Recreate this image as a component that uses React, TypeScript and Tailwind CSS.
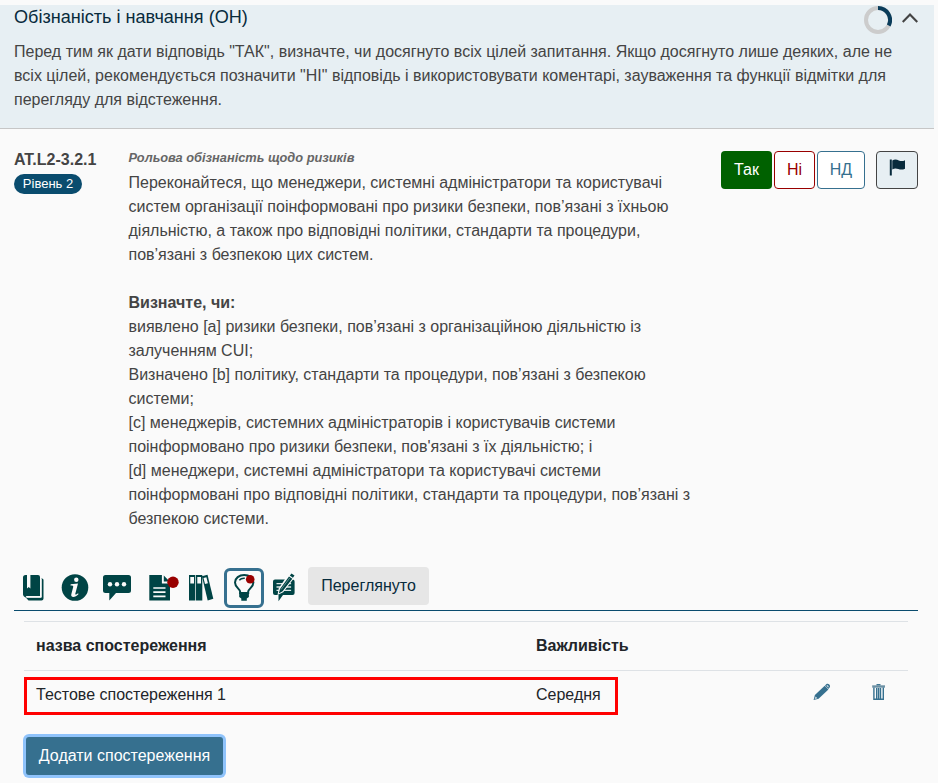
import React from "react";

const intro = [
  'Перед тим як дати відповідь "ТАК", визначте, чи досягнуто всіх цілей запитання. Якщо досягнуто лише деяких, але не',
  'всіх цілей, рекомендується позначити "НІ" відповідь і використовувати коментарі, зауваження та функції відмітки для',
  "перегляду для відстеження.",
];

const question = [
  "Переконайтеся, що менеджери, системні адміністратори та користувачі",
  "систем організації поінформовані про ризики безпеки, пов’язані з їхньою",
  "діяльністю, а також про відповідні політики, стандарти та процедури,",
  "пов’язані з безпекою цих систем.",
];

const objectives = [
  "виявлено [a] ризики безпеки, пов’язані з організаційною діяльністю із",
  "залученням CUI;",
  "Визначено [b] політику, стандарти та процедури, пов’язані з безпекою",
  "системи;",
  "[c] менеджерів, системних адміністраторів і користувачів системи",
  "поінформовано про ризики безпеки, пов'язані з їх діяльністю; і",
  "[d] менеджери, системні адміністратори та користувачі системи",
  "поінформовані про відповідні політики, стандарти та процедури, пов’язані з",
  "безпекою системи.",
];

function Lines({ items }: { items: string[] }) {
  return (
    <>
      {items.map((line) => (
        <div key={line} className="whitespace-nowrap">
          {line}
        </div>
      ))}
    </>
  );
}

function ProgressRing() {
  return (
    <svg width="28" height="28" viewBox="0 0 28 28" fill="none" strokeWidth="4">
      <circle cx="14" cy="14" r="12" stroke="#cccccc" />
      <path d="M14 2A12 12 0 0 1 24.700 19.500" stroke="#0a3c5a" />
    </svg>
  );
}

function BookIcon() {
  return (
    <svg width="22" height="28" viewBox="0 0 22 28" className="ml-[9px]">
      <path d="M2.500 1H4v13.500l1.700-1.600 1.700 1.600V1H15a2 2 0 0 1 2 2v19H4a1 1 0 0 0-.6 1.900L1 22.500a3 3 0 0 1-1-2V3.500A2.500 2.500 0 0 1 2.500 1z" fill="#004445" />
      <path d="M2.500 23.300H18V4.500h1a1.500 1.500 0 0 1 1.500 1.500V24.500a2 2 0 0 1-2 2H5.500z" fill="#004445" />
      <path d="M3.500 23.300H18.300V4.500" fill="none" stroke="#fafafa" strokeWidth="1" />
    </svg>
  );
}

function InfoIcon() {
  return (
    <svg width="28" height="28" viewBox="0 0 28 28" className="ml-4">
      <circle cx="14" cy="13.500" r="13.300" fill="#004445" />
      <circle cx="15.300" cy="5.800" r="2.200" fill="#fafafa" />
      <path d="M9.700 10.300l7.300-.9-2.700 10.300c-.3 1.300.8 1.300 2.600-.5l.7.7c-3.200 3.900-8.200 4-7.300.3l1.900-7.200c.3-1.200-.5-1.600-2.700-1.600z" fill="#fafafa" />
    </svg>
  );
}

function CommentIcon() {
  return (
    <svg width="28" height="28" viewBox="0 0 28 28" className="ml-3.5">
      <path d="M2.500 1h23A2.500 2.500 0 0 1 28 3.500v13a2.500 2.500 0 0 1-2.500 2.500H13l-6.700 7.500V19H2.500A2.500 2.500 0 0 1 0 16.500v-13A2.500 2.500 0 0 1 2.500 1z" fill="#004445" />
      <g fill="#fafafa">
        <circle cx="7" cy="10.200" r="2.200" />
        <circle cx="14" cy="10.200" r="2.200" />
        <circle cx="21" cy="10.200" r="2.200" />
      </g>
    </svg>
  );
}

function DocumentIcon() {
  return (
    <svg width="31" height="28" viewBox="0 0 31 28" className="ml-[18px]">
      <path d="M.3 1h12.600v8.500H21V26.500H.3z M14.800 1.500l5.800 6h-5.800z" fill="#004445" />
      <path d="M4.300 14h12.200M4.300 18.200h12.200M4.300 22.400h12.200" stroke="#fafafa" strokeWidth="1.700" />
      <circle cx="24" cy="8.200" r="5.700" fill="#990000" />
    </svg>
  );
}

function BindersIcon() {
  return (
    <svg width="25" height="28" viewBox="0 0 25 28" className="ml-[9px]">
      <g fill="#004445">
        <path d="M0 1h6.300v25.500H0zM7 1h6.300v25.500H7z" />
        <path d="M12.900 2.300l5.600-1.600 5.800 24-5.600 1.700z" />
      </g>
      <g fill="#fafafa">
        <path d="M1.300 3h3.700v6.400H1.300zM8.300 3H12v6.400H8.300zM14.500 4.100l2.900-.8 1.500 6-2.900.8z" />
      </g>
    </svg>
  );
}

function BulbIcon() {
  return (
    <svg width="24" height="30" viewBox="0 0 24 30">
      <path d="M8.100 20V18.500C7.800 15.700 3 14.300 3 9.500a9.200 7.600 0 0 1 18.400 0c0 4.800-4.900 6.200-5.200 9V20z" fill="#fafafa" stroke="#004445" strokeWidth="2" />
      <path d="M7.300 7.300c1.200-1.500 3-2.200 5.500-2" fill="none" stroke="#004445" strokeWidth="1.500" />
      <path d="M7.200 19.600h9.700v4.500l-2.100 1.300v2.300H9.300v-2.300l-2.100-1.300z" fill="#004445" />
      <circle cx="18.200" cy="6.300" r="4.300" fill="#990000" />
    </svg>
  );
}

function CommentPenIcon() {
  return (
    <svg width="22" height="30" viewBox="0 0 22 30" className="ml-[9px]">
      <path d="M2 6.500h17.600a2 2 0 0 1 2 2V20a2 2 0 0 1-2 2H10l-4.500 6.300V22H2a2 2 0 0 1-2-2V8.500a2 2 0 0 1 2-2z" fill="#004445" />
      <path d="M3.500 10.700h14.600M3.500 14h14.600M3.500 17.300h14.600" stroke="#dbe6e6" strokeWidth="1.300" />
      <path d="M4.500 22l1.200-6.500L16 0h5.500v4.500L10.200 19.200z" fill="#fafafa" />
      <path d="M5.800 20.500l1.200-4.400L16 3.400l3.300 2.300L9.600 18.200zM16.800 2.500L18.500.4l3 2.100-1.600 2.200z" fill="#004445" />
      <path d="M8 16.600l8.800-11.700" stroke="#86aaaa" strokeWidth=".7" />
    </svg>
  );
}

function FlagIcon() {
  return (
    <svg width="17" height="17" viewBox="0 0 17 17" fill="#082b3c">
      <path d="M.8 .5h2v16h-2z" />
      <path d="M3.300 1.500c2.500-1.500 4.600-.8 6.500-.1 2 .8 3.800 1 6.200-.2v8.500c-2.600 1.300-4.600 1-6.700.3-2-.7-3.900-.9-6 .5z" />
    </svg>
  );
}

function PencilIcon() {
  return (
    <svg width="18" height="18" viewBox="0 0 18 18">
      <path d="M.6 17l1.300-5L11.700 2.700l3.700 3.700-9.800 9.400z" fill="#36708f" />
      <path d="M12 2.400l1.500-1.300c1.800-1.300 4.500 1.300 3.200 3.200l-1.300 1.600z" fill="#36708f" />
      <path d="M1.700 16.100l.9-2.600 1.800 1.800z" fill="#d5e0e6" />
      <path d="M13.500 2.500c1-.8 2.600.8 1.800 1.900z" fill="#fafafa" />
    </svg>
  );
}

function TrashIcon() {
  return (
    <svg width="14" height="17" viewBox="0 0 14 17" fill="none" stroke="#36708f">
      <path d="M4.500.8h4" strokeWidth="1.500" />
      <path d="M.2 2.500h12.800" strokeWidth="2.400" stroke="#6c91a5" />
      <path d="M1.900 3.500v11.800h9.400V3.500M4.700 4v11M6.600 4v11M8.500 4v11" strokeWidth="1.400" />
    </svg>
  );
}

export default function App() {
  return (
    <div className="h-[783px] w-[938px] overflow-hidden bg-[#fafafa] pt-[5px] font-['Liberation_Sans',Arial,sans-serif] text-base leading-6 text-[#444444]">
      <header className="h-[124px] w-[934px] border-b border-[#c6c6c6] bg-[#e7eff3] pl-3.5">
        <div className="flex h-[35px] justify-between pr-4">
          <h1 className="text-[18.080px] leading-6 text-[#082b3c]">Обізнаність і навчання (ОН)</h1>
          <div className="flex items-start gap-2.5">
            <div className="pt-px"><ProgressRing /></div>
            <svg width="16" height="10" viewBox="0 0 16 10" fill="none" stroke="#444444" strokeWidth="2.200" className="mt-2">
              <path d="M.7 9L8 1.600 15.300 9" />
            </svg>
          </div>
        </div>
        <Lines items={intro} />
      </header>

      <main className="ml-3.5 w-[904px]">
        <section className="flex h-[439px] pt-5">
          <div className="w-[114.500px] pt-px">
            <div className="text-base font-bold leading-5">AT.L2-3.2.1</div>
            <span className="mt-1 flex h-5 w-[68px] items-center justify-center rounded-full bg-[#0a4c6e] text-[13px] leading-5 text-white">Рівень 2</span>
          </div>
          <div className="w-[592.500px]">
            <div className="h-[22px] text-[12.800px] font-bold italic leading-[18px] text-[#666666]">Рольова обізнаність щодо ризиків</div>
            <Lines items={question} />
            <div className="mt-6 font-bold">Визначте, чи:</div>
            <Lines items={objectives} />
          </div>
          <div className="flex h-[38px] gap-0.5 pt-[2px]">
            <button className="h-[38px] w-[51px] shrink-0 rounded bg-[#006100] text-white">Так</button>
            <button className="h-[38px] w-[41px] shrink-0 rounded border border-[#990000] bg-white text-[#990000]">Ні</button>
            <button className="h-[38px] w-12 shrink-0 rounded border border-[#36708f] bg-white text-[#36708f]">НД</button>
            <button className="ml-[9px] flex h-[38px] w-[42px] shrink-0 justify-center rounded border border-[#444444] bg-[#e7eff3] pt-[7px]"><FlagIcon /></button>
          </div>
        </section>

        <nav className="flex h-[43px] items-start border-b border-[#0a4c6e]">
          <div className="flex h-10 items-center">
            <BookIcon />
            <InfoIcon />
            <CommentIcon />
            <DocumentIcon />
            <BindersIcon />
            <button className="ml-2.5 flex h-10 w-10 items-center justify-center rounded-md border-[3px] border-[#36708f]"><BulbIcon /></button>
            <CommentPenIcon />
          </div>
          <button className="ml-[13px] -mt-px h-[38px] w-[121px] rounded bg-[#e6e6e6] text-[#082b3c]">Переглянуто</button>
        </nav>

        <section className="ml-2.5 mt-2.5 w-[884px] text-[#212529]">
          <div className="flex h-[49px] items-center border-t border-[#dee2e6] pl-3 font-bold">
            <div className="w-[500px]">назва спостереження</div>
            <div>Важливість</div>
          </div>
          <div className="flex h-[57px] border-t border-[#dee2e6] pt-1.5">
            <div className="flex h-[38px] w-[594px] items-start border-[3px] border-[#ff0000] pl-[9px] pt-[3px]">
              <div className="w-[500px]">Тестове спостереження 1</div>
              <div>Середня</div>
            </div>
            <div className="flex pl-[195px] pt-[6px]">
              <PencilIcon />
              <div className="ml-[41px] pt-[1px]"><TrashIcon /></div>
            </div>
          </div>
          <button className="ml-0.5 mt-2.5 h-[38px] w-[197px] rounded-[3px] bg-[#36708f] text-white ring-3 ring-[#8fc3fb]">Додати спостереження</button>
        </section>
      </main>
    </div>
  );
}
